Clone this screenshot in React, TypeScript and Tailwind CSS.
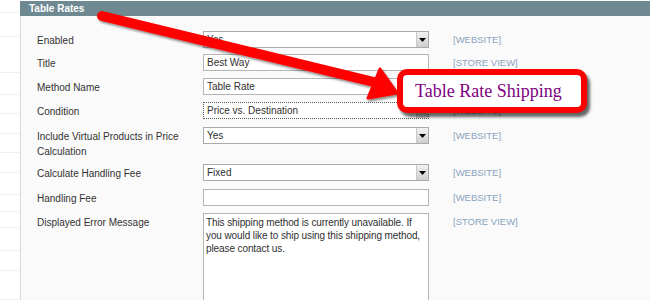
import type { ReactNode } from 'react';

const SANS = "font-['Liberation_Sans',Arial,sans-serif]";

function Select({ value, focused = false }: { value: string; focused?: boolean }) {
  return (
    <div
      className={
        'flex h-[17px] w-[226px] items-center bg-white ' +
        (focused ? 'border border-dotted border-[#555]' : 'border border-[#aaa]')
      }
    >
      <span className="flex-1 pl-[3px] text-[10px] leading-none text-[#2f2f2f]">{value}</span>
      <span className="flex h-[15px] w-[12px] items-center justify-center border-l border-[#c8c8c8] bg-gradient-to-b from-[#f2f2f2] to-[#cfcfcf]">
        <svg width="7" height="4" viewBox="0 0 7 4">
          <path d="M0 0h7L3.5 4z" fill="#000" />
        </svg>
      </span>
    </div>
  );
}

function Input({ value = '' }: { value?: string }) {
  return (
    <div className="flex h-[17px] w-[226px] items-center border border-[#b5b5b5] bg-white pl-[3px] text-[10px] leading-none text-[#2f2f2f]">
      {value}
    </div>
  );
}

function Row({
  label,
  scope,
  children,
  className = '',
}: {
  label: ReactNode;
  scope?: string;
  children: ReactNode;
  className?: string;
}) {
  return (
    <div className={'flex items-start ' + className}>
      <div className="w-[166px] pt-[2px] text-[10px] leading-[15px] text-[#333]">{label}</div>
      <div className="w-[250px] shrink-0">{children}</div>
      <div className="pt-[3px] text-[9.5px] leading-[12px] text-[#8aa4c0]">{scope}</div>
    </div>
  );
}

export default function App() {
  return (
    <div className={`relative h-[300px] w-[650px] overflow-hidden bg-white ${SANS}`}>
      <div className="flex h-full">
        {/* left nav strip */}
        <div className="flex w-[20px] flex-col bg-white">
          {[13, 25, 37, 22, 20, 20, 20, 20, 23, 17, 16, 24, 20, 30].map((h, i) => (
            <div key={i} style={{ height: h }} className="border-b border-[#f0f0f0]" />
          ))}
        </div>

        {/* fieldset panel */}
        <div className="flex flex-1 flex-col pt-[1px]">
          <div className="flex h-[18px] items-center bg-[#6f8992] pl-[9px] text-[10px] font-bold text-white">
            Table Rates
          </div>
          <div className="flex flex-1 flex-col gap-[6px] border-l border-[#d9d9d9] bg-[#fafafa] pl-[16px] pt-[15px]">
            <Row label="Enabled" scope="[WEBSITE]">
              <Select value="Yes" />
            </Row>
            <Row label="Title" scope="[STORE VIEW]">
              <Input value="Best Way" />
            </Row>
            <Row label="Method Name" scope="[STORE VIEW]" className="mt-[1px]">
              <Input value="Table Rate" />
            </Row>
            <Row label="Condition" scope="[WEBSITE]" className="mt-[1px]">
              <Select value="Price vs. Destination" focused />
            </Row>
            <Row
              label={
                <>
                  Include Virtual Products in Price
                  <br />
                  Calculation
                </>
              }
              scope="[WEBSITE]"
              className="mt-[2px] h-[30px]"
            >
              <Select value="Yes" />
            </Row>
            <Row label="Calculate Handling Fee" scope="[WEBSITE]" className="mt-[1px]">
              <Select value="Fixed" />
            </Row>
            <Row label="Handling Fee" scope="[WEBSITE]" className="mt-[2px]">
              <Input />
            </Row>
            <Row label="Displayed Error Message" scope="[STORE VIEW]" className="mt-[1px]">
              <div className="h-[120px] w-[226px] border border-[#b5b5b5] bg-white px-[2px] pt-[2px] text-[10px] leading-[13px] tracking-[-0.1px] text-[#2f2f2f]">
                This shipping method is currently unavailable. If you would like to ship using this shipping
                method, please contact us.
              </div>
            </Row>
          </div>
        </div>
      </div>

      {/* red annotation arrow */}
      <svg className="pointer-events-none absolute left-0 top-0" width="650" height="300">
        <defs>
          <filter id="sh" x="-10%" y="-10%" width="120%" height="130%">
            <feDropShadow dx="1.5" dy="2" stdDeviation="1.2" floodColor="#000" floodOpacity="0.45" />
          </filter>
        </defs>
        <g filter="url(#sh)">
          <line x1="102" y1="16" x2="378" y2="83" stroke="#ff0000" strokeWidth="10" strokeLinecap="round" />
          <path d="M397 93 L368 98 L380 69 Z" fill="#ff0000" stroke="#ff0000" strokeWidth="3" strokeLinejoin="round" />
        </g>
      </svg>

      {/* callout */}
      <div className="absolute left-[397px] top-[69px] flex h-[44px] w-[190px] items-center rounded-[10px] border-[6px] border-[#ff0000] bg-white pl-[12px] shadow-[3px_4px_3px_rgba(0,0,0,0.6)]">
        <span className="font-['Liberation_Serif','Times_New_Roman',serif] text-[18px] leading-none text-[#800080]">
          Table Rate Shipping
        </span>
      </div>
    </div>
  );
}
